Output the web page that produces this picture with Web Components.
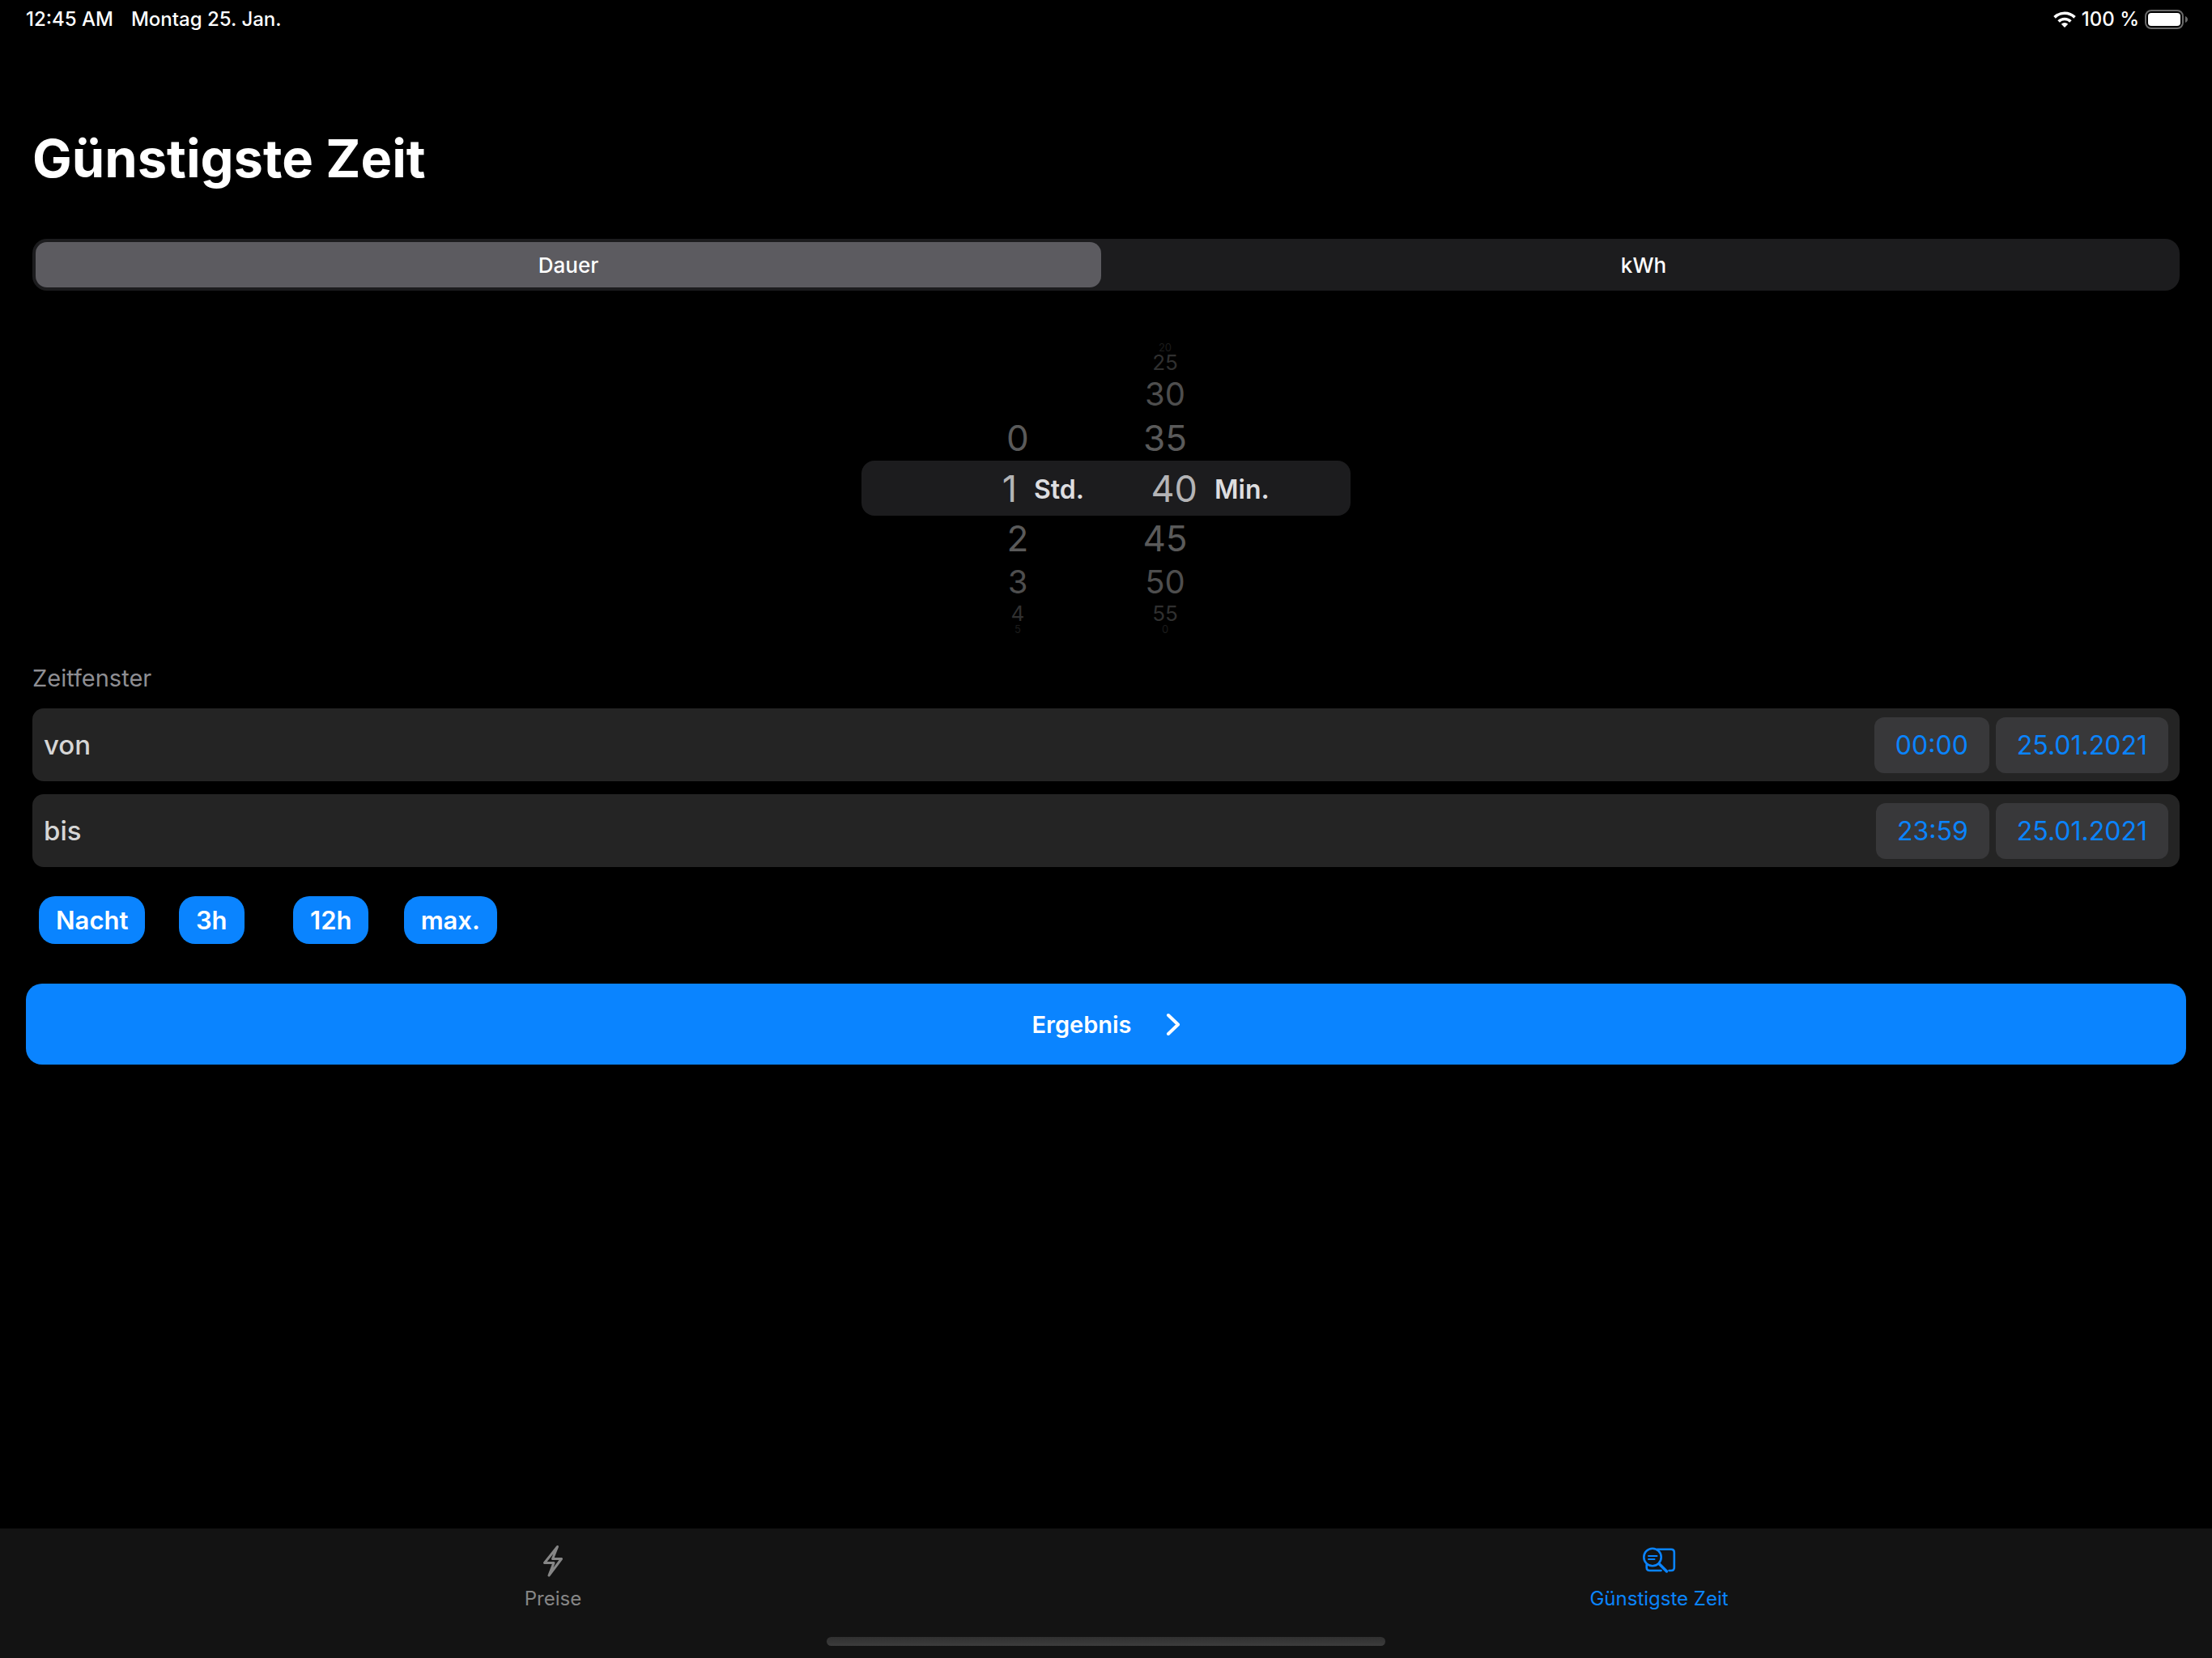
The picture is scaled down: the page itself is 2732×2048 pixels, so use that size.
<!DOCTYPE html>
<html lang="de">
<head>
<meta charset="utf-8">
<meta name="viewport" content="width=device-width, initial-scale=1">
<title>Günstigste Zeit</title>
<style>
  html, body { margin: 0; height: 100%; background: #000; }
  body { font-family: Inter, "Liberation Sans", sans-serif; color: #fff; }
</style>
</head>
<body>
<price-app></price-app>
<script>
const define = (name, html, setup) => customElements.define(name, class extends HTMLElement {
  constructor() {
    super();
    this.attachShadow({ mode: "open" });
  }
  connectedCallback() {
    this.shadowRoot.innerHTML = html;
    if (setup) setup(this, this.shadowRoot);
  }
});

define("status-bar", `
<style>
  :host { display: flex; justify-content: space-between; align-items: center; height: 48px; padding: 0 30px 0 32px; font-size: 24px; font-weight: 500; line-height: 32px; }
  div { display: flex; align-items: center; }
  .left { gap: 22px; }
  .right { gap: 7px; }
  svg { display: block; }
</style>
<div class="left"><span>12:45 AM</span><span>Montag 25. Jan.</span></div>
<div class="right">
  <svg width="28" height="20" viewBox="0 0 28 20" fill="none" stroke="#fff" stroke-width="3.6" aria-hidden="true">
    <path d="M1.500 7.400a17.800 17.800 0 0 1 25 0"/>
    <path d="M6.600 12.500a10.600 10.600 0 0 1 14.800 0"/>
    <path d="M14 20l-4.200-4.300a6 6 0 0 1 8.400 0z" fill="#fff" stroke="none"/>
  </svg>
  <span>100 %</span>
  <svg width="53" height="24" viewBox="0 0 53 24" aria-hidden="true">
    <rect x="1" y="1" width="46" height="22" rx="7" fill="none" stroke="#6a6a6a" stroke-width="2"/>
    <rect x="4" y="4" width="40" height="16" rx="4" fill="#fff"/>
    <path d="M50 8c2 1 3 2.300 3 4s-1 3-3 4z" fill="#6a6a6a"/>
  </svg>
</div>`);

define("segment-control", `
<style>
  :host { display: block; }
  fieldset { display: flex; gap: 12px; margin: 0; border: 0; padding: 4px; border-radius: 18px; background: #1c1c1e; }
  label { flex: 1; display: flex; justify-content: center; align-items: center; height: 56px; border-radius: 14px; font-size: 26px; font-weight: 500; cursor: pointer; }
  label:has(input:checked) { background: #5c5b60; }
  input { appearance: none; width: 0; height: 0; margin: 0; }
</style>
<fieldset aria-label="Modus">
  <label><input type="radio" name="mode" checked><span>Dauer</span></label>
  <label><input type="radio" name="mode"><span>kWh</span></label>
</fieldset>`);

define("wheel-column", `
<style>
  :host { display: block; flex: 1; }
  fieldset { display: flex; flex-direction: column; margin: 0; border: 0; padding: 0; min-width: 0; }
  label { display: flex; align-items: center; white-space: nowrap; line-height: 1; color: #5a5a5a; }
  .value { width: 60px; margin-left: var(--start); text-align: center; }
  .d1 { height: 56px; font-size: 44px; }
  .d2 { height: 52px; font-size: 40px; color: #4e4e4e; }
  .d3 { height: 26px; font-size: 26px; color: #303030; }
  .d4 { height: 12px; font-size: 13px; color: #1c1c1c; }
  .d0 { height: 68px; gap: 21px; font-size: 45px; color: #b4b4b6; background: #1c1c1e; border-radius: var(--corners); }
  .d0 .value { width: var(--selected-edge); margin-left: 0; text-align: right; }
  .unit { padding-top: 4px; font-size: 32px; font-weight: 600; color: #dedee0; }
  input { appearance: none; width: 0; height: 0; margin: 0; position: absolute; }
</style>
<fieldset></fieldset>`, (host, root) => {
  const values = host.getAttribute("values").split(",");
  const set = root.querySelector("fieldset");
  set.setAttribute("aria-label", host.getAttribute("unit"));
  values.forEach((value, i) => {
    const distance = Math.abs(i - 4);
    const row = document.createElement(value ? "label" : "div");
    row.className = "d" + distance;
    if (value) {
      row.innerHTML = `<input type="radio" name="wheel"><span class="value">${value}</span>`;
      if (distance === 0) {
        row.firstChild.checked = true;
        row.insertAdjacentHTML("beforeend", `<span class="unit">${host.getAttribute("unit")}</span>`);
      }
    }
    set.append(row);
  });
});

define("duration-picker", `
<style>
  :host { display: flex; width: 604px; margin: 0 auto; }
  .hours { --start: 163px; --selected-edge: 192px; --corners: 16px 0 0 16px; }
  .minutes { --start: 43px; --selected-edge: 113px; --corners: 0 16px 16px 0; }
</style>
<wheel-column class="hours" unit="Std." values=",,,0,1,2,3,4,5"></wheel-column>
<wheel-column class="minutes" unit="Min." values="20,25,30,35,40,45,50,55,0"></wheel-column>`);

define("time-row", `
<style>
  :host { display: flex; align-items: center; gap: 8px; height: 90px; box-sizing: border-box; padding: 0 14px; border-radius: 14px; background: #242424; }
  .name { flex: 1; font-size: 33px; font-weight: 500; color: #d6d6d6; }
  button { height: 69px; border: 0; border-radius: 12px; padding: 0 26px; background: #38383a; color: #0a84ff; font: inherit; font-size: 32px; }
</style>
<span class="name" id="name"><slot></slot></span>
<button class="time" type="button" aria-describedby="name"></button>
<button class="date" type="button" aria-describedby="name"></button>`, (host, root) => {
  root.querySelector(".time").textContent = host.getAttribute("time");
  root.querySelector(".date").textContent = host.getAttribute("date");
});

define("preset-chip", `
<style>
  :host { display: flex; justify-content: center; }
  button { height: 59px; border: 0; border-radius: 20px; padding: 0 21px; background: #0a84ff; color: #fff; font: inherit; font-size: 31px; font-weight: 600; }
</style>
<button type="button"><slot></slot></button>`);

define("result-button", `
<style>
  :host { display: block; }
  button { display: flex; justify-content: center; align-items: center; gap: 42px; width: 100%; height: 100px; border: 0; border-radius: 20px; background: #0a84ff; color: #fff; font: inherit; font-size: 29px; font-weight: 600; }
</style>
<button type="button"><span><slot></slot></span>
  <svg width="18" height="28" viewBox="0 0 18 28" fill="none" stroke="#fff" stroke-width="4" stroke-linecap="round" stroke-linejoin="round" aria-hidden="true"><path d="M3 3l12 11.500-12 11.500"/></svg>
</button>`);

define("tab-item", `
<style>
  :host { display: block; flex: 1; color: #868686; }
  :host([active]) { color: #0a84ff; }
  a { display: flex; flex-direction: column; align-items: center; gap: 7px; color: inherit; text-decoration: none; font-size: 24px; line-height: 32px; }
  ::slotted(svg) { display: block; }
</style>
<a href="#"><slot name="icon"></slot><span><slot></slot></span></a>`);

define("tab-bar", `
<style>
  :host { display: flex; flex-direction: column; justify-content: space-between; height: 160px; box-sizing: border-box; padding: 16px 0 15px; background: #131313; }
  nav { display: flex; }
  .home { width: 690px; height: 11px; margin: 0 auto; border-radius: 6px; background: linear-gradient(#303030, #3c3c3c); }
</style>
<nav>
  <tab-item>
    <svg slot="icon" width="48" height="48" viewBox="0 0 48 48" fill="none" stroke="currentColor" stroke-width="3" stroke-linejoin="round" aria-hidden="true">
      <path d="M29.500 6.500L13.500 26.500h11.500l-6 15.500L34.500 21.500H23.500z"/>
    </svg>Preise</tab-item>
  <tab-item active>
    <svg slot="icon" width="48" height="48" viewBox="0 0 48 48" fill="none" stroke="currentColor" stroke-width="2.600" stroke-linecap="round" aria-hidden="true">
      <circle cx="16" cy="19.500" r="10.700"/>
      <path d="M11 18h10.500M11 22h7.500" stroke-width="2"/>
      <path d="M24.500 28l9 9" stroke-width="3.500"/>
      <path d="M22 9.800h17q3.800 0 3.800 3.800v18.600q0 3.800-3.800 3.800h-2.500M26.500 36H12.500q-3.800 0-3.800-3.800v-3.500"/>
    </svg>Günstigste Zeit</tab-item>
</nav>
<div class="home"></div>`);

define("price-app", `
<style>
  :host { display: flex; flex-direction: column; min-height: 100vh; }
  main { flex: 1; padding: 103px 32px 0; }
  .content { display: flex; flex-direction: column; padding: 0 8px; }
  h1 { margin: 0 0 54px; font-size: 65px; line-height: 90px; font-weight: 700; }
  duration-picker { margin: 64px auto 0; }
  h2 { margin: 35px 0 18px; font-size: 29px; line-height: 39px; font-weight: 400; color: #8e8e93; }
  .rows { display: flex; flex-direction: column; gap: 16px; }
  .presets { display: grid; grid-template-columns: repeat(4, 1fr); width: 590px; margin: 36px 0 49px; }
</style>
<status-bar></status-bar>
<main>
  <div class="content">
    <h1>Günstigste Zeit</h1>
    <segment-control></segment-control>
    <duration-picker></duration-picker>
    <h2>Zeitfenster</h2>
    <div class="rows">
      <time-row time="00:00" date="25.01.2021">von</time-row>
      <time-row time="23:59" date="25.01.2021">bis</time-row>
    </div>
    <div class="presets">
      <preset-chip>Nacht</preset-chip>
      <preset-chip>3h</preset-chip>
      <preset-chip>12h</preset-chip>
      <preset-chip>max.</preset-chip>
    </div>
  </div>
  <result-button>Ergebnis</result-button>
</main>
<tab-bar></tab-bar>`);
</script>
</body>
</html>
